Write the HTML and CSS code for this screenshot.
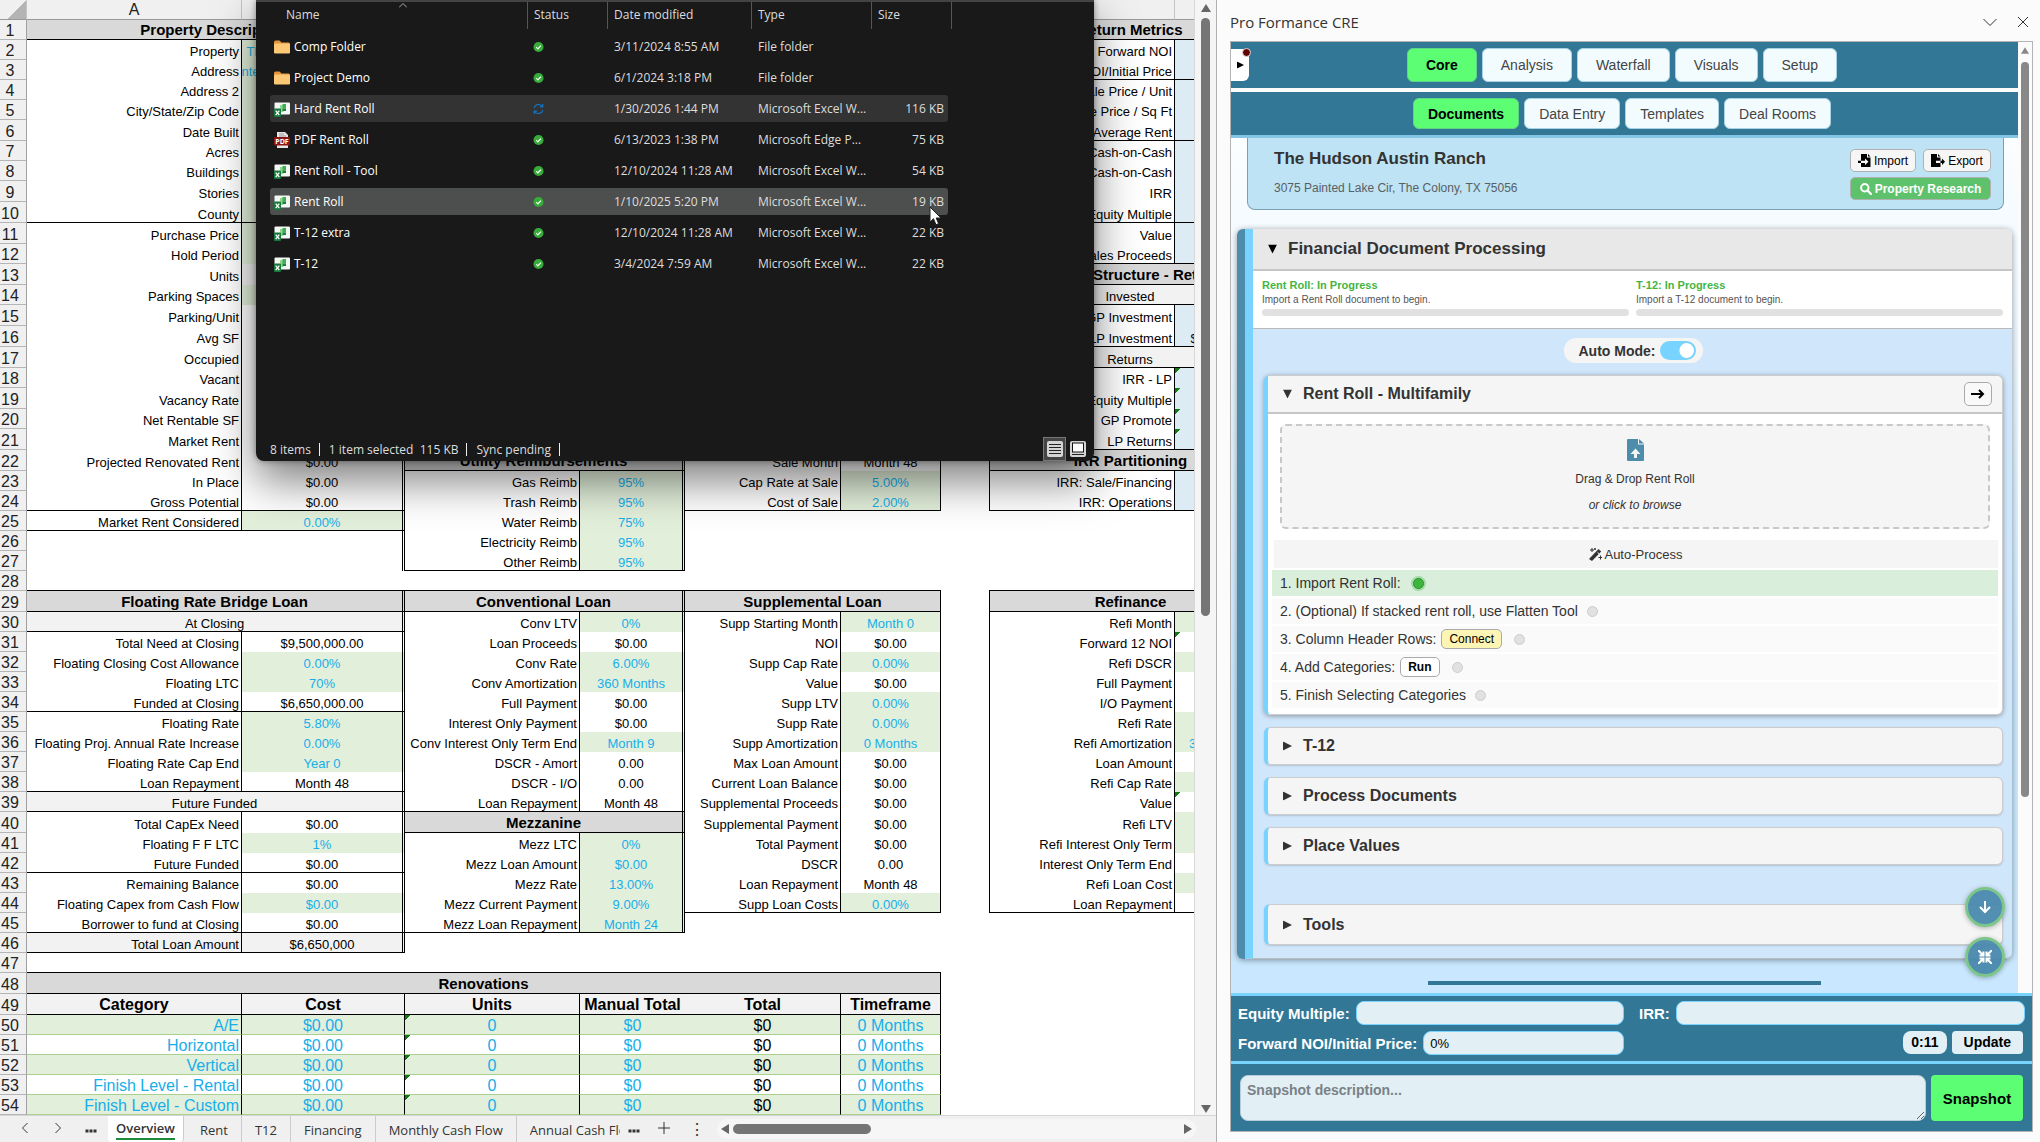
FILE: index.html
```html
<!DOCTYPE html>
<html lang="en">
<head>
<meta charset="utf-8">
<title>Pro Formance CRE</title>
<link rel="stylesheet" href="styles.css">
</head>
<body>
<svg class="defs" aria-hidden="true">
  <symbol id="folder" viewBox="0 0 16 16"><path d="M0 3a1.500 1.500 0 0 1 1.500-1.500h4L7.500 3.500h7A1.500 1.500 0 0 1 16 5v2H0z" fill="#e2953c"/><rect y="4.500" width="16" height="10" rx="1.200" fill="#fcc875"/></symbol>
  <symbol id="xls" viewBox="0 0 16 16"><rect x="0.500" y="1.500" width="15.500" height="12" rx="1" fill="#f4f8f4"/><path d="M6 4h3.500v7H6z" fill="#8fd68f"/><path d="M8.500 3H12v4.500H8.500z" fill="#3fae55"/><path d="M8.500 7.500H12V10H8.500z" fill="#1f7d3f"/><rect y="7.500" width="7" height="8.500" rx="1" fill="#157a3c"/><path d="M1.700 9.600l3.600 4.600M5.300 9.600l-3.600 4.600" stroke="#fff" stroke-width="1.300"/></symbol>
  <symbol id="ok" viewBox="0 0 12 12"><circle cx="6" cy="6" r="5.500" fill="#37ac3b"/><path d="M3.500 6.200l1.800 1.800 3.300-3.600" fill="none" stroke="#fff" stroke-width="1.300"/></symbol>
  <symbol id="down" viewBox="0 0 10 10"><path d="M0 0h10L5 10z"/></symbol>
  <symbol id="right" viewBox="0 0 10 10"><path d="M0 0l10 5L0 10z"/></symbol>
</svg>
<div class="app">
<main class="book">
  <div class="grid-area">
    <div class="sheet">
    <table class="cells">
      <colgroup><col class="c-n"><col class="c-a"><col class="c-b"><col class="c-c"><col class="c-d"><col class="c-e"><col class="c-f"><col class="c-g"><col class="c-h"><col class="c-i"></colgroup>
      <tr class="heads"><th class="corner"></th><th>A</th><th>B</th><th>C</th><th>D</th><th>E</th><th>F</th><th>G</th><th>H</th><th>I</th></tr>
      <tr><th>1</th><td colspan="2" class="h b d">Property Description</td><td colspan="4"></td><td></td><td colspan="2" class="h b">Return Metrics</td></tr>
      <tr><th>2</th><td class="l">Property</td><td class="g d"><span class="clip">The Hudson Austin Ranch</span></td><td colspan="4"></td><td></td><td class="l">Forward NOI</td><td class="u"></td></tr>
      <tr><th>3</th><td class="l">Address</td><td class="g d"><span class="clip">3075 Painted Lake Cir, The Colony, TX 75056</span></td><td colspan="4"></td><td></td><td class="l b">Forward NOI/Initial Price</td><td class="u b"></td></tr>
      <tr><th>4</th><td class="l">Address 2</td><td class="g d"></td><td colspan="4"></td><td></td><td class="l">Sale Price / Unit</td><td class="u"></td></tr>
      <tr><th>5</th><td class="l">City/State/Zip Code</td><td class="g d"></td><td colspan="4"></td><td></td><td class="l">Sale Price / Sq Ft</td><td class="u"></td></tr>
      <tr class="t"><th>6</th><td class="l">Date Built</td><td class="g d"></td><td colspan="4"></td><td></td><td class="l b">Average Rent</td><td class="u b"></td></tr>
      <tr><th>7</th><td class="l">Acres</td><td class="g d"></td><td colspan="4"></td><td></td><td class="l">Year 1 Cash-on-Cash</td><td class="u"></td></tr>
      <tr><th>8</th><td class="l">Buildings</td><td class="g d"></td><td colspan="4"></td><td></td><td class="l">Avg Cash-on-Cash</td><td class="u"></td></tr>
      <tr class="t"><th>9</th><td class="l">Stories</td><td class="g d"></td><td colspan="4"></td><td></td><td class="l">IRR</td><td class="u"></td></tr>
      <tr class="t"><th>10</th><td class="l b">County</td><td class="g d b"></td><td colspan="4"></td><td></td><td class="l b">Equity Multiple</td><td class="u b"></td></tr>
      <tr class="t"><th>11</th><td class="l">Purchase Price</td><td class="g d"></td><td colspan="4"></td><td></td><td class="l">Value</td><td class="u"></td></tr>
      <tr><th>12</th><td class="l">Hold Period</td><td class="g d"></td><td colspan="4"></td><td></td><td class="l b">Sales Proceeds</td><td class="u b"></td></tr>
      <tr class="t"><th>13</th><td class="l">Units</td><td class="f d"></td><td colspan="4"></td><td></td><td colspan="2" class="h b">Capital Structure - Return</td></tr>
      <tr><th>14</th><td class="l">Parking Spaces</td><td class="g d"></td><td colspan="4"></td><td></td><td colspan="2" class="f b">Invested</td></tr>
      <tr class="t"><th>15</th><td class="l">Parking/Unit</td><td class="d"></td><td colspan="4"></td><td></td><td class="l">GP Investment</td><td class="u"></td></tr>
      <tr class="t"><th>16</th><td class="l">Avg SF</td><td class="d"></td><td colspan="4"></td><td></td><td class="l b">LP Investment</td><td class="u b">$2,850,000</td></tr>
      <tr class="t"><th>17</th><td class="l">Occupied</td><td class="d"></td><td colspan="4"></td><td></td><td colspan="2" class="f b">Returns</td></tr>
      <tr><th>18</th><td class="l">Vacant</td><td class="d"></td><td colspan="4"></td><td></td><td class="l">IRR - LP</td><td class="u m"></td></tr>
      <tr class="t"><th>19</th><td class="l">Vacancy Rate</td><td class="d"></td><td colspan="4"></td><td></td><td class="l">Equity Multiple</td><td class="u m"></td></tr>
      <tr><th>20</th><td class="l">Net Rentable SF</td><td class="d"></td><td colspan="4"></td><td></td><td class="l">GP Promote</td><td class="u m"></td></tr>
      <tr class="t"><th>21</th><td class="l">Market Rent</td><td class="d"></td><td colspan="4"></td><td></td><td class="l b">LP Returns</td><td class="u m b"></td></tr>
      <tr class="t"><th>22</th><td class="l">Projected Renovated Rent</td><td class="d">$0.00</td><td colspan="2" class="h b d">Utility Reimbursements</td><td class="l">Sale Month</td><td class="r">Month 48</td><td></td><td colspan="2" class="h b s">IRR Partitioning</td></tr>
      <tr><th>23</th><td class="l">In Place</td><td class="d">$0.00</td><td class="l">Gas Reimb</td><td class="g d">95%</td><td class="l">Cap Rate at Sale</td><td class="g r">5.00%</td><td></td><td class="l s">IRR: Sale/Financing</td><td class="u"></td></tr>
      <tr><th>24</th><td class="l b">Gross Potential</td><td class="d b">$0.00</td><td class="l">Trash Reimb</td><td class="g d">95%</td><td class="l b">Cost of Sale</td><td class="g r b">2.00%</td><td></td><td class="l s b">IRR: Operations</td><td class="u b"></td></tr>
      <tr><th>25</th><td class="l b">Market Rent Considered</td><td class="g d b">0.00%</td><td class="l">Water Reimb</td><td class="g d">75%</td><td colspan="5"></td></tr>
      <tr><th>26</th><td></td><td class="d"></td><td class="l">Electricity Reimb</td><td class="g d">95%</td><td colspan="5"></td></tr>
      <tr><th>27</th><td></td><td class="d"></td><td class="l b">Other Reimb</td><td class="g d b">95%</td><td colspan="5"></td></tr>
      <tr><th>28</th><td colspan="6" class="b"></td><td></td><td colspan="2" class="b"></td></tr>
      <tr class="t"><th>29</th><td colspan="2" class="h b d">Floating Rate Bridge Loan</td><td colspan="2" class="h b d">Conventional Loan</td><td colspan="2" class="h b r">Supplemental Loan</td><td></td><td colspan="2" class="h b s">Refinance</td></tr>
      <tr><th>30</th><td colspan="2" class="f b d">At Closing</td><td class="l">Conv LTV</td><td class="g d">0%</td><td class="l">Supp Starting Month</td><td class="g r">Month 0</td><td></td><td class="l s">Refi Month</td><td class="g"></td></tr>
      <tr><th>31</th><td class="l">Total Need at Closing</td><td class="d">$9,500,000.00</td><td class="l">Loan Proceeds</td><td class="d">$0.00</td><td class="l">NOI</td><td class="r">$0.00</td><td></td><td class="l s">Forward 12 NOI</td><td class="m"></td></tr>
      <tr><th>32</th><td class="l">Floating Closing Cost Allowance</td><td class="g d">0.00%</td><td class="l">Conv Rate</td><td class="g d">6.00%</td><td class="l">Supp Cap Rate</td><td class="g r">0.00%</td><td></td><td class="l s">Refi DSCR</td><td class="g"></td></tr>
      <tr><th>33</th><td class="l">Floating LTC</td><td class="g d">70%</td><td class="l">Conv Amortization</td><td class="g d">360 Months</td><td class="l">Value</td><td class="r">$0.00</td><td></td><td class="l s">Full Payment</td><td></td></tr>
      <tr><th>34</th><td class="l b">Funded at Closing</td><td class="d b">$6,650,000.00</td><td class="l">Full Payment</td><td class="d">$0.00</td><td class="l">Supp LTV</td><td class="g r">0.00%</td><td></td><td class="l s">I/O Payment</td><td></td></tr>
      <tr><th>35</th><td class="l">Floating Rate</td><td class="g d">5.80%</td><td class="l">Interest Only Payment</td><td class="d">$0.00</td><td class="l">Supp Rate</td><td class="g r">0.00%</td><td></td><td class="l s">Refi Rate</td><td class="g"></td></tr>
      <tr><th>36</th><td class="l">Floating Proj. Annual Rate Increase</td><td class="g d">0.00%</td><td class="l">Conv Interest Only Term End</td><td class="g d">Month 9</td><td class="l">Supp Amortization</td><td class="g r">0 Months</td><td></td><td class="l s">Refi Amortization</td><td class="g">360 Months</td></tr>
      <tr><th>37</th><td class="l">Floating Rate Cap End</td><td class="g d">Year 0</td><td class="l">DSCR - Amort</td><td class="d">0.00</td><td class="l">Max Loan Amount</td><td class="r">$0.00</td><td></td><td class="l s">Loan Amount</td><td></td></tr>
      <tr><th>38</th><td class="l b">Loan Repayment</td><td class="d b">Month 48</td><td class="l">DSCR - I/O</td><td class="d">0.00</td><td class="l">Current Loan Balance</td><td class="r">$0.00</td><td></td><td class="l s">Refi Cap Rate</td><td class="g"></td></tr>
      <tr><th>39</th><td colspan="2" class="f b d">Future Funded</td><td class="l b">Loan Repayment</td><td class="d b">Month 48</td><td class="l">Supplemental Proceeds</td><td class="r">$0.00</td><td></td><td class="l s">Value</td><td class="m"></td></tr>
      <tr class="t"><th>40</th><td class="l">Total CapEx Need</td><td class="d">$0.00</td><td colspan="2" class="h b d">Mezzanine</td><td class="l">Supplemental Payment</td><td class="r">$0.00</td><td></td><td class="l s">Refi LTV</td><td class="g"></td></tr>
      <tr><th>41</th><td class="l">Floating F F LTC</td><td class="g d">1%</td><td class="l">Mezz LTC</td><td class="g d">0%</td><td class="l">Total Payment</td><td class="r">$0.00</td><td></td><td class="l s">Refi Interest Only Term</td><td class="g"></td></tr>
      <tr><th>42</th><td class="l b">Future Funded</td><td class="d b">$0.00</td><td class="l">Mezz Loan Amount</td><td class="g d">$0.00</td><td class="l">DSCR</td><td class="r">0.00</td><td></td><td class="l s">Interest Only Term End</td><td></td></tr>
      <tr><th>43</th><td class="l">Remaining Balance</td><td class="d">$0.00</td><td class="l">Mezz Rate</td><td class="g d">13.00%</td><td class="l">Loan Repayment</td><td class="r">Month 48</td><td></td><td class="l s">Refi Loan Cost</td><td class="g"></td></tr>
      <tr><th>44</th><td class="l">Floating Capex from Cash Flow</td><td class="g d">$0.00</td><td class="l">Mezz Current Payment</td><td class="g d">9.00%</td><td class="l b">Supp Loan Costs</td><td class="g r b">0.00%</td><td></td><td class="l s b">Loan Repayment</td><td class="b"></td></tr>
      <tr><th>45</th><td class="l b">Borrower to fund at Closing</td><td class="d b">$0.00</td><td class="l b">Mezz Loan Repayment</td><td class="g d b">Month 24</td><td colspan="5"></td></tr>
      <tr><th>46</th><td class="l f b">Total Loan Amount</td><td class="f d b">$6,650,000</td><td colspan="7"></td></tr>
      <tr><th>47</th><td colspan="6" class="b"></td><td colspan="3"></td></tr>
      <tr class="t"><th>48</th><td colspan="6" class="h b r">Renovations</td><td colspan="3"></td></tr>
      <tr class="t big sub"><th>49</th><td class="r b">Category</td><td class="r b">Cost</td><td class="r b">Units</td><td class="b">Manual Total</td><td class="r b">Total</td><td class="r b">Timeframe</td><td colspan="3" class="out"></td></tr>
      <tr class="big reno g-row"><th>50</th><td class="l">A/E</td><td class="r">$0.00</td><td class="r m">0</td><td>$0</td><td class="r k">$0</td><td class="r">0 Months</td><td colspan="3" class="out"></td></tr>
      <tr class="big reno"><th>51</th><td class="l">Horizontal</td><td class="r">$0.00</td><td class="r m">0</td><td>$0</td><td class="r k">$0</td><td class="r">0 Months</td><td colspan="3" class="out"></td></tr>
      <tr class="big reno g-row"><th>52</th><td class="l">Vertical</td><td class="r">$0.00</td><td class="r m">0</td><td>$0</td><td class="r k">$0</td><td class="r">0 Months</td><td colspan="3" class="out"></td></tr>
      <tr class="big reno"><th>53</th><td class="l">Finish Level - Rental</td><td class="r">$0.00</td><td class="r m">0</td><td>$0</td><td class="r k">$0</td><td class="r">0 Months</td><td colspan="3" class="out"></td></tr>
      <tr class="big reno g-row"><th>54</th><td class="l">Finish Level - Custom</td><td class="r">$0.00</td><td class="r m">0</td><td>$0</td><td class="r k">$0</td><td class="r">0 Months</td><td colspan="3" class="out"></td></tr>
    </table>
    </div>
    <div class="vbar"><svg width="10" height="8" viewBox="0 0 10 8"><path d="M5 0l5 8H0z"/></svg><div class="vtrack"><i></i></div><svg width="10" height="8" viewBox="0 0 10 8"><path d="M0 0h10L5 8z"/></svg></div>
  </div>
  <nav class="tabs">
    <button class="ic" aria-label="Previous"><svg width="8" height="12" viewBox="0 0 8 12"><path d="M6.500 1L1.500 6l5 5"/></svg></button>
    <button class="ic" aria-label="Next"><svg width="8" height="12" viewBox="0 0 8 12"><path d="M1.500 1l5 5-5 5"/></svg></button>
    <button class="ic" aria-label="All sheets"><svg class="dots" width="12" height="4" viewBox="0 0 12 4"><path d="M.5.500h3v3h-3zM4.500.500h3v3h-3zM8.500.500h3v3h-3z"/></svg></button>
    <button class="tab on"><span>Overview</span></button>
    <button class="tab">Rent</button>
    <button class="tab">T12</button>
    <button class="tab">Financing</button>
    <button class="tab">Monthly Cash Flow</button>
    <button class="tab last"><span class="cut">Annual Cash Flow</span></button>
    <button class="more" aria-label="More sheets"><svg class="dots" width="12" height="4" viewBox="0 0 12 4"><path d="M.5.500h3v3h-3zM4.500.500h3v3h-3zM8.500.500h3v3h-3z"/></svg></button>
    <button class="ic" aria-label="New sheet"><svg width="12" height="12" viewBox="0 0 12 12"><path d="M6 0v12M0 6h12"/></svg></button>
    <span class="kebab">⋮</span>
    <div class="hbar"><svg width="8" height="10" viewBox="0 0 8 10"><path d="M8 0v10L0 5z"/></svg><div class="htrack"><i></i></div><svg width="8" height="10" viewBox="0 0 8 10"><path d="M0 0v10l8-5z"/></svg></div>
  </nav>

  <section class="explorer">
    <table class="files">
      <colgroup><col class="f-name"><col class="f-status"><col class="f-date"><col class="f-type"><col class="f-size"><col class="f-end"></colgroup>
      <tr><th class="name">Name<svg class="caret" width="8" height="5" viewBox="0 0 8 5"><path d="M0 4.500L4 .5l4 4"/></svg></th><th>Status</th><th>Date modified</th><th>Type</th><th class="nob">Size</th><th class="end"></th></tr>
      <tr><td><svg class="fi"><use href="#folder"/></svg>Comp Folder</td><td><svg class="st"><use href="#ok"/></svg></td><td>3/11/2024 8:55 AM</td><td>File folder</td><td></td></tr>
      <tr><td><svg class="fi"><use href="#folder"/></svg>Project Demo</td><td><svg class="st"><use href="#ok"/></svg></td><td>6/1/2024 3:18 PM</td><td>File folder</td><td></td></tr>
      <tr class="sel"><td><svg class="fi"><use href="#xls"/></svg>Hard Rent Roll</td><td><svg class="st sync" viewBox="0 0 12 12"><path d="M1.200 5A5 5 0 0 1 10 3M10.800 7A5 5 0 0 1 2 9M10.600.5V3.600H7.500M1.400 11.500V8.400h3.100"/></svg></td><td>1/30/2026 1:44 PM</td><td>Microsoft Excel W...</td><td>116 KB</td></tr>
      <tr><td><svg class="fi" viewBox="0 0 16 16"><path d="M3 0h8l3 3v13H3z" fill="#e8e4e4"/><path d="M5 2h5M5 4h7" stroke="#999"/><rect y="5" width="16" height="8.500" rx="1" fill="#8c1515"/><text x="8" y="12" text-anchor="middle" class="pdf">PDF</text></svg>PDF Rent Roll</td><td><svg class="st"><use href="#ok"/></svg></td><td>6/13/2023 1:38 PM</td><td>Microsoft Edge P...</td><td>75 KB</td></tr>
      <tr><td><svg class="fi"><use href="#xls"/></svg>Rent Roll - Tool</td><td><svg class="st"><use href="#ok"/></svg></td><td>12/10/2024 11:28 AM</td><td>Microsoft Excel W...</td><td>54 KB</td></tr>
      <tr class="hov"><td><svg class="fi"><use href="#xls"/></svg>Rent Roll</td><td><svg class="st"><use href="#ok"/></svg></td><td>1/10/2025 5:20 PM</td><td>Microsoft Excel W...</td><td>19 KB</td></tr>
      <tr><td><svg class="fi"><use href="#xls"/></svg>T-12 extra</td><td><svg class="st"><use href="#ok"/></svg></td><td>12/10/2024 11:28 AM</td><td>Microsoft Excel W...</td><td>22 KB</td></tr>
      <tr><td><svg class="fi"><use href="#xls"/></svg>T-12</td><td><svg class="st"><use href="#ok"/></svg></td><td>3/4/2024 7:59 AM</td><td>Microsoft Excel W...</td><td>22 KB</td></tr>
    </table>
    <footer class="statusbar"><span>8 items</span><span>1 item selected&nbsp; 115 KB</span><span>Sync pending</span>
      <div class="views">
        <button class="on" aria-label="Details"><svg width="16" height="16" viewBox="0 0 16 16"><rect width="16" height="16" rx="2" fill="#d5d5d5"/><path d="M2 3.500h12M2 6.500h12M2 9.500h12M2 12.500h12" stroke="#222"/></svg></button>
        <button aria-label="Large icons"><svg width="16" height="16" viewBox="0 0 16 16"><rect width="16" height="16" rx="2" fill="#d5d5d5"/><rect x="2.500" y="2" width="11" height="9" fill="#fff" stroke="#111"/><path d="M2 13.500h12" stroke="#222"/></svg></button>
      </div>
    </footer>
    <svg class="cursor" width="14" height="20" viewBox="0 0 14 20"><path d="M1 1v15l3.500-3.300 2.500 6 2.600-1.100L7.200 12H12z" fill="#fff" stroke="#222"/></svg>
  </section>
</main>

<aside class="pane">
  <header class="pane-head"><h1>Pro Formance CRE</h1>
    <button aria-label="Collapse"><svg width="14" height="14" viewBox="0 0 14 14"><path d="M.5 4L7 10.500 13.500 4"/></svg></button>
    <button aria-label="Close"><svg width="12" height="12" viewBox="0 0 12 12"><path d="M1 1l10 10M11 1L1 11"/></svg></button>
  </header>
  <div class="frame">
    <div class="view">
      <div class="scroller">
        <nav class="nav main-nav">
          <button class="drawer" aria-label="Open menu"><svg width="7" height="8" viewBox="0 0 10 10"><use href="#right"/></svg><i></i></button>
          <button class="on">Core</button><button>Analysis</button><button>Waterfall</button><button>Visuals</button><button>Setup</button>
        </nav>
        <nav class="nav sub-nav"><button class="on">Documents</button><button>Data Entry</button><button>Templates</button><button>Deal Rooms</button></nav>
        <div class="content">
          <section class="property">
            <div><h2>The Hudson Austin Ranch</h2><p>3075 Painted Lake Cir, The Colony, TX 75056</p></div>
            <div class="acts">
              <button><svg width="13" height="13" viewBox="0 0 13 13"><path d="M3 0h6v3.500h3.500V13H3V9h4v2l3.500-3.300L7 4.500v2.200H3z"/><path d="M10 0l2.500 2.600H10zM0 6.700h3V9H0z"/></svg>Import</button>
              <button><svg width="14" height="13" viewBox="0 0 14 13"><path d="M0 0h6v3.500h3.500v3.200H5V9h4.500v4H0z"/><path d="M7 0l2.500 2.600H7zM9.500 6.700H11V4.500L14 7.800 11 11V9H9.500z"/></svg>Export</button>
              <button class="research"><svg width="12" height="12" viewBox="0 0 12 12"><circle cx="4.800" cy="4.800" r="3.700" fill="none" stroke="#fff" stroke-width="2"/><path d="M7.500 7.500L11 11" stroke="#fff" stroke-width="2.400" stroke-linecap="round"/></svg>Property Research</button>
            </div>
          </section>
          <section class="docs"><div class="docs-in">
            <h2><button class="fold"><svg width="9" height="10" viewBox="0 0 10 10"><use href="#down"/></svg>Financial Document Processing</button></h2>
            <div class="progress">
              <div><b>Rent Roll: In Progress</b><small>Import a Rent Roll document to begin.</small><i></i></div>
              <div><b>T-12: In Progress</b><small>Import a T-12 document to begin.</small><i></i></div>
            </div>
            <div class="docs-body">
              <label class="auto">Auto Mode:<input type="checkbox" checked></label>
              <section class="card open">
                <h3><button class="fold"><svg width="9" height="10" viewBox="0 0 10 10"><use href="#down"/></svg>Rent Roll - Multifamily</button><button class="go" aria-label="Go to sheet"><svg width="14" height="10" viewBox="0 0 14 10"><path d="M0 5h12M8 1l4 4-4 4"/></svg></button></h3>
                <button class="drop"><svg width="17" height="22" viewBox="0 0 17 22"><path d="M1 0h10v5.500h6V21a1 1 0 0 1-1 1H1a1 1 0 0 1-1-1V1a1 1 0 0 1 1-1zM12 0l5 4.500h-5z" fill="#4e8cac"/><path d="M8.500 9.500L13.500 15H10v4H7v-4H3.500z" fill="#f5f5f5"/></svg><span>Drag &amp; Drop Rent Roll</span><em>or click to browse</em></button>
                <button class="process"><svg width="13" height="13" viewBox="0 0 13 13"><path d="M0 11L9.500 1l2.700 2.500L3 13z"/><path d="M8.500 4.300L10.300 6" stroke="#f5f5f5"/><path d="M3 0v4M1 2h4M6 0v2M5 1h2M11.500 7.500v4M9.500 9.500h4" stroke="#333"/></svg>Auto-Process</button>
                <ol class="steps">
                  <li class="done"><span>1. Import Rent Roll:</span><i></i></li>
                  <li><span>2. (Optional) If stacked rent roll, use Flatten Tool</span><i class="near"></i></li>
                  <li><span>3. Column Header Rows:</span><button class="yellow">Connect</button><i></i></li>
                  <li><span>4. Add Categories:</span><button>Run</button><i></i></li>
                  <li><span>5. Finish Selecting Categories</span><i class="near"></i></li>
                </ol>
              </section>
              <section class="card"><h3><button class="fold"><svg width="9" height="10" viewBox="0 0 10 10"><use href="#right"/></svg>T-12</button></h3></section>
              <section class="card"><h3><button class="fold"><svg width="9" height="10" viewBox="0 0 10 10"><use href="#right"/></svg>Process Documents</button></h3></section>
              <section class="card"><h3><button class="fold"><svg width="9" height="10" viewBox="0 0 10 10"><use href="#right"/></svg>Place Values</button></h3></section>
              <section class="card tools"><h3><button class="fold"><svg width="9" height="10" viewBox="0 0 10 10"><use href="#right"/></svg>Tools</button></h3></section>
            </div>
          </div></section>
          <hr>
        </div>
      </div>
      <div class="rail"><svg width="8" height="7" viewBox="0 0 10 8"><path d="M5 0l5 8H0z"/></svg><i></i></div>
      <div class="floaters">
        <button aria-label="Scroll down"><svg width="14" height="14" viewBox="0 0 14 14"><path d="M7 1v11M2 7l5 5 5-5"/></svg></button>
        <button aria-label="Collapse all"><svg width="14" height="14" viewBox="0 0 14 14"><path d="M0 0l5 5M5.500 1.500v4h-4M14 0L9 5M8.500 1.500v4h4M0 14l5-5M5.500 12.500v-4h-4M14 14L9 9M8.500 12.500v-4h4"/></svg></button>
      </div>
    </div>
    <form class="metrics">
      <div class="m-left">
        <label>Equity Multiple:<input type="text"></label>
        <label>Forward NOI/Initial Price:<input type="text" value="0%"></label>
      </div>
      <div class="m-right">
        <label>IRR:<input type="text"></label>
        <div class="m-acts"><output>0:11</output><button type="button">Update</button></div>
      </div>
    </form>
    <form class="snap"><textarea aria-label="Snapshot description" placeholder="Snapshot description..."></textarea><button type="button">Snapshot</button></form>
  </div>
</aside>
</div>
</body>
</html>
```
FILE: styles.css
```css
* { box-sizing: border-box; }
body { margin: 0; font-family: "Liberation Sans", Arial, sans-serif; color: #333; background: #fafafa; }
button { font: inherit; color: inherit; border: 0; background: none; padding: 0; margin: 0; }
h1, h2, h3, p, ol { margin: 0; padding: 0; }
i { display: block; }
.defs { display: none; }
.app { display: grid; grid-template-columns: minmax(0, 1216fr) minmax(0, 824fr); height: 100vh; overflow: hidden; }

/* Workbook */
.book { position: relative; display: flex; flex-direction: column; overflow: hidden; background: #f0f0f0; }
.grid-area { flex: 1; display: flex; min-height: 0; }
.sheet { flex: 1; overflow: hidden; background: #fff; border-right: 1px solid #d8d8d8; }
.cells { table-layout: fixed; width: 1271px; border-spacing: 0; font-size: 13px; line-height: 16px; color: #000; }
.c-n { width: 27px; } .c-a { width: 215px; } .c-b { width: 163px; } .c-c { width: 175px; } .c-d { width: 105px; }
.c-e { width: 156px; } .c-f { width: 100px; } .c-g { width: 48px; } .c-h { width: 186px; } .c-i { width: 96px; }
.cells td, .cells th { height: 20px; padding: 0; text-align: center; vertical-align: bottom; white-space: nowrap; overflow: hidden; }
.cells .t td, .cells .t th { height: 21px; }
.cells th { background: #f0f0f0; font-weight: 400; font-size: 16px; color: #222; border-right: 1px solid #a0a0a0; border-bottom: 1px solid #b5b5b5; padding: 0 6px 0 0; }
.cells .heads th { padding: 0 0 1px; border-bottom-color: #999; border-right-color: #c4c4c4; }
.cells .corner { background: linear-gradient(135deg, #f0f0f0 60%, #b4b4b4 60%); }
.cells .l { text-align: right; padding-right: 2px; border-right: 1px solid #000; }
.cells .r { border-right: 1px solid #000; }
.cells .d { border-right: 3px double #000; }
.cells .s { border-left: 1px solid #000; }
.cells .b { border-bottom: 1px solid #000; line-height: 14px; }
.cells .h { background: #d9d9d9; font-weight: 700; font-size: 15px; line-height: 18px; }
.cells .f { background: #f2f2f2; }
.cells .g { background: #e2efda; color: #17aeea; }
.cells .u { background: #ddebf4; }
.cells .m { background-image: linear-gradient(135deg, #107c10 4px, transparent 4px); }
.clip { display: flex; justify-content: center; overflow: hidden; }
.cells .big td { font-size: 16px; line-height: 18px; }
.cells .sub td { font-weight: 700; background: #f2f2f2; }
.cells .reno td { color: #17aeea; border-bottom: 1px solid #a9d08e; line-height: 17px; }
.cells .g-row td { background-color: #e2efda; }
.cells .reno td.k { color: #000; }
.cells tr td.out { background: none; border: 0; }
.vbar { width: 21px; display: flex; flex-direction: column; align-items: center; padding: 4px 0 2px; background: #f4f5f4; fill: #666; }
.vtrack { flex: 1; padding-top: 6px; display: flex; }
.vtrack i { width: 9px; height: 55%; border-radius: 5px; background: #757575; }

.tabs { height: 27px; display: flex; align-items: center; font: 13px "Open Sans", "Noto Sans", sans-serif; color: #333; border-top: 1px solid #d5d5d5; }
.tabs svg { fill: none; stroke: #333; stroke-width: 1; }
.tabs .dots { fill: #333; stroke: none; display: inline-block; vertical-align: middle; }
.ic { width: 33px; text-align: center; }
.ic:first-child { margin-left: 8px; }
.tab { height: 100%; padding: 2px 13px 0; border-right: 1px solid #ccc; white-space: nowrap; }
.tab.on { background: #fff; padding: 0 8px; margin: 0 3px 0 1px; font-weight: 600; border-radius: 0 0 4px 4px; }
.tab.on span { display: block; border-bottom: 2px solid #1e8a3e; line-height: 20px; }
.tab.last { border: 0; padding-right: 0; }
.cut { display: block; width: 90px; overflow: hidden; text-align: left; }
.more { margin: 0 8px; }
.kebab { width: 32px; text-align: center; font-size: 16px; }
.hbar { flex: 1; display: flex; align-items: center; gap: 4px; margin: 0 20px 0 4px; padding: 0 4px; height: 20px; border-radius: 10px; background: #f6f6f6; }
.tabs .hbar svg { fill: #666; stroke: none; }
.htrack { flex: 1; }
.htrack i { width: 31%; height: 10px; border-radius: 5px; background: #757575; }

/* File window over the sheet */
.explorer { position: absolute; left: 256px; top: 0; width: 838px; height: 461px; background: #191919; color: #eee; border-top: 2px solid #444; border-radius: 0 0 8px 8px; box-shadow: 0 20px 44px rgba(0,0,0,.5), 0 0 6px rgba(0,0,0,.4); font: 12px "Open Sans", "Noto Sans", sans-serif; display: flex; flex-direction: column; }
.files { table-layout: fixed; width: 682px; margin: -4px 0 0 14px; border-spacing: 0 4px; }
.f-name { width: 258px; } .f-status { width: 80px; } .f-date { width: 144px; } .f-type { width: 120px; } .f-size { width: 76px; } .f-end { width: 4px; }
.files th { height: 27px; padding: 0 0 2px 6px; text-align: left; font-weight: 400; border-right: 1px solid #555; color: #ddd; position: relative; }
.files th.name { padding-left: 16px; }
.files th.nob { border: 0; }
.files th.end { padding: 0; }
.caret { position: absolute; left: 129px; top: 1px; fill: none; stroke: #aaa; }
.files td { height: 27px; padding: 0 0 0 6px; white-space: nowrap; color: #ddd; }
.files td:first-child { padding-left: 4px; color: #fff; border-radius: 3px 0 0 3px; }
.files td:nth-child(2) { padding-left: 5px; }
.files td:nth-child(5) { text-align: right; padding-right: 4px; border-radius: 0 3px 3px 0; }
.fi { width: 16px; height: 16px; vertical-align: middle; margin-right: 4px; }
.pdf { font: 700 7px "Open Sans", sans-serif; fill: #fff; }
.st { width: 11px; height: 12px; display: block; }
.sync { fill: none; stroke: #1474c4; stroke-width: 1.3; }
.sel td { background: #333; }
.hov td { background: #4d4f4e; }
.statusbar { margin-top: auto; height: 24px; display: flex; align-items: center; padding-left: 14px; color: #ddd; }
.statusbar span { line-height: 13px; padding-right: 8px; margin-right: 9px; border-right: 1px solid #eee; }
.views { margin-left: auto; display: flex; align-self: stretch; padding-right: 5px; }
.views button { width: 23px; display: grid; place-items: center; border: 1px solid transparent; }
.views .on { background: #454545; border-color: #777; }
.cursor { position: absolute; left: 673px; top: 204px; }

/* Task pane */
.pane { display: flex; flex-direction: column; border-left: 1px solid #b0b0b0; padding: 0 7px 10px 13px; background: #fbfbfb; min-width: 0; }
.pane-head { height: 41px; display: flex; align-items: center; padding: 3px 4px 0 0; gap: 20px; }
.pane-head h1 { flex: 1; font: 400 15px "Open Sans", "Noto Sans", sans-serif; }
.pane-head svg { fill: none; stroke: #333; display: block; }
.frame { flex: 1; min-height: 0; display: flex; flex-direction: column; border: 1px solid #b4b4b4; }
.view { position: relative; flex: 1; min-height: 0; display: flex; }
.scroller { flex: 1; min-width: 0; display: flex; flex-direction: column; overflow: hidden; }
.rail { width: 14px; display: flex; flex-direction: column; align-items: center; gap: 8px; padding-top: 5px; fill: #888; }
.rail i { width: 8px; height: 735px; border-radius: 4px; background: #888; }
.nav { position: relative; display: flex; justify-content: center; align-items: center; gap: 5px; padding-right: 5px; background: #327896; font-size: 14px; color: #444; }
.nav button { background: #f2fcff; border-radius: 6px; border: 1px solid #a7d3e4; height: 34px; padding: 0 18px; }
.nav .on { background: #5cff74; border-color: #5fd489; color: #000; font-weight: 700; }
.main-nav { height: 46px; }
.sub-nav { height: 46px; margin-top: 4px; border-bottom: 3px solid #84c5e6; }
.sub-nav button { height: 31px; padding: 0 14px; }
.nav .drawer { position: absolute; left: 0; top: 7px; width: 18px; height: 32px; padding: 0; display: grid; place-items: center; background: #fff; border: 0; border-radius: 0 6px 6px 0; }
.drawer i { position: absolute; right: -2px; top: -1px; width: 9px; height: 9px; border-radius: 50%; background: #650000; border: 1px solid #ddd; }
.content { flex: 1; background: linear-gradient(#fbfdff, #f2faff 15%, #c9e8ff 65%); }
.property { margin: 0 14px 0 16px; height: 72px; display: flex; justify-content: space-between; padding: 11px 12px 0 26px; background: #bde3f4; border: 1px solid #7b9fb2; border-top: 0; border-radius: 0 0 8px 8px; }
.property h2 { font-size: 17px; line-height: 20px; }
.property p { margin-top: 10px; font-size: 12px; line-height: 18px; color: #5a5f63; }
.acts { display: grid; grid-template-columns: 66px 68px; gap: 5px 7px; align-content: start; font-size: 12px; color: #000; }
.acts button { height: 23px; display: flex; align-items: center; justify-content: center; gap: 3px; background: #f6f6f6; border: 1px solid #b0b0b0; border-radius: 5px; }
.acts .research { grid-column: 1 / 3; background: #5ec26c; color: #fff; font-weight: 700; }
.docs { margin: 19px 6px 0 6px; border-left: 8px solid #4e8cac; border-radius: 6px; box-shadow: 0 1px 6px rgba(0,0,0,.4); }
.docs-in { border-left: 8px solid #78d4ff; border-bottom: 1px solid #bbb; border-radius: 0 6px 6px 0; background: #d0e6fa; overflow: hidden; }
.fold { display: flex; align-items: center; font-weight: 700; }
.docs h2 { height: 42px; display: flex; align-items: center; padding-left: 15px; font-size: 17px; background: #e8e8e8; border-bottom: 2px solid #c6c6c6; }
.docs h2 svg { margin-right: 11px; }
.progress { display: flex; gap: 7px; height: 58px; padding: 7px 9px 0; background: #fff; border-bottom: 1px solid #bbb; }
.progress div { flex: 1; }
.progress b { display: block; font-size: 11px; line-height: 15px; color: #44b544; }
.progress small { display: block; font-size: 10px; line-height: 14px; color: #555; }
.progress i { height: 7px; margin-top: 2px; border-radius: 4px; background: #e0e1e0; }
.docs-body { padding: 9px 9px 13px 11px; display: flex; flex-direction: column; gap: 12px; }
.auto { align-self: center; height: 25px; display: flex; align-items: center; gap: 5px; padding: 0 7px 0 15px; border-radius: 12px; background: #f5f5f5; font-size: 14px; font-weight: 700; }
.auto input { appearance: none; margin: 0; width: 36px; height: 19px; border-radius: 10px; border: 2px solid #78d4ff; background: radial-gradient(circle at 25px 50%, #fff 7px, #78d4ff 8px); }
.card { background: #f5f5f5; border: 1px solid #ccc; border-left: 4px solid #78d4ff; border-radius: 6px; box-shadow: 0 1px 2px rgba(0,0,0,.15); }
.card h3 { height: 36px; display: flex; align-items: center; justify-content: space-between; padding: 0 10px 0 15px; font-size: 16px; }
.card h3 svg { margin-right: 11px; fill: #333; }
.card.open { background: #fff; padding-bottom: 6px; box-shadow: 0 1px 5px rgba(0,0,0,.35); }
.card.open h3 { height: 38px; background: #f5f5f5; border-bottom: 2px solid #c6c6c6; border-radius: 0 6px 0 0; }
.card.tools { margin-top: 27px; }
.card.tools h3 { height: 39px; }
.go { width: 28px; height: 24px; border: 1px solid #aaa; border-radius: 5px; background: #f9f9f9; display: grid; place-items: center; }
.card h3 .go svg { margin: 0; fill: none; stroke: #000; stroke-width: 2; }
.drop { width: calc(100% - 24px); margin: 10px 12px 0; height: 105px; display: flex; flex-direction: column; align-items: center; padding-top: 13px; border: 2px dashed #c8c8c8; border-radius: 6px; background: #f5f5f5; font-size: 12px; }
.drop span { margin-top: 10px; line-height: 16px; }
.drop em { margin-top: 10px; line-height: 16px; }
.process { width: calc(100% - 10px); margin: 11px 4px 2px 6px; height: 28px; display: flex; align-items: center; justify-content: center; gap: 2px; background: #f5f5f5; font-size: 13px; fill: #333; }
.steps { list-style: none; margin: 0 4px; display: grid; gap: 2px; font-size: 14px; }
.steps li { height: 26px; display: flex; align-items: center; padding-left: 8px; background: #fafafa; }
.steps i { width: 11px; height: 11px; margin-left: 12px; border-radius: 50%; background: #e0e1e0; border: 1px solid #cdcdcd; }
.steps i.near { margin-left: 9px; }
.steps .done { background: #d9eedb; }
.steps .done i { background: #3fb53f; border-color: #269426; box-shadow: 0 0 0 2px #a5d9a9; }
.steps button { height: 20px; margin-left: 5px; padding: 0 7px; border: 1px solid #aaa; border-radius: 5px; background: #fff; color: #000; font-size: 12px; font-weight: 700; }
.steps .yellow { background: #fcf5b4; font-weight: 400; }
.content hr { width: 50%; height: 4px; margin: 22px auto 0; border: 0; background: #327896; }
.floaters { position: absolute; right: 27px; bottom: 16px; display: grid; gap: 10px; }
.floaters button { width: 40px; height: 40px; display: grid; place-items: center; border: 3px solid #7cc68c; border-radius: 50%; background: rgba(72,136,172,.94); box-shadow: 0 1px 5px rgba(0,0,0,.3); }
.floaters svg { fill: none; stroke: #fff; stroke-width: 2; }

.metrics { display: grid; grid-template-columns: minmax(0, 386fr) minmax(0, 386fr); gap: 15px; height: 71px; padding: 5px 7px 0; border-top: 3px solid #78d4ff; border-bottom: 3px solid #78d4ff; background: #327896; color: #fff; font-size: 15px; font-weight: 700; }
.m-left, .m-right { display: grid; gap: 6px; align-content: start; }
.metrics label { display: flex; align-items: center; gap: 6px; height: 24px; }
.metrics input { flex: 1; min-width: 0; height: 24px; border: 1px solid #78d4ff; border-radius: 8px; background: #e2f0f6; padding: 0 6px; font: 13px "Liberation Sans", Arial, sans-serif; color: #000; }
.m-acts { display: flex; justify-content: flex-end; gap: 5px; padding-right: 2px; color: #000; font-size: 14px; }
.metrics output, .m-acts button { height: 23px; line-height: 23px; border-radius: 8px; background: #e2f0f6; padding: 0 8px; }
.m-acts button { border-radius: 4px; padding: 0 12px; }
.snap { display: flex; gap: 5px; height: 67px; padding: 11px 9px 10px; background: #327896; }
.snap textarea { flex: 1; border: 1px solid #b9cdd6; border-radius: 8px; background: #e2f0f6; padding: 6px; font: 700 14px "Liberation Sans", Arial, sans-serif; }
.snap textarea::placeholder { color: #7a8185; }
.snap button { width: 92px; border-radius: 4px; background: #5cff74; color: #000; font-size: 15px; font-weight: 700; }
```
